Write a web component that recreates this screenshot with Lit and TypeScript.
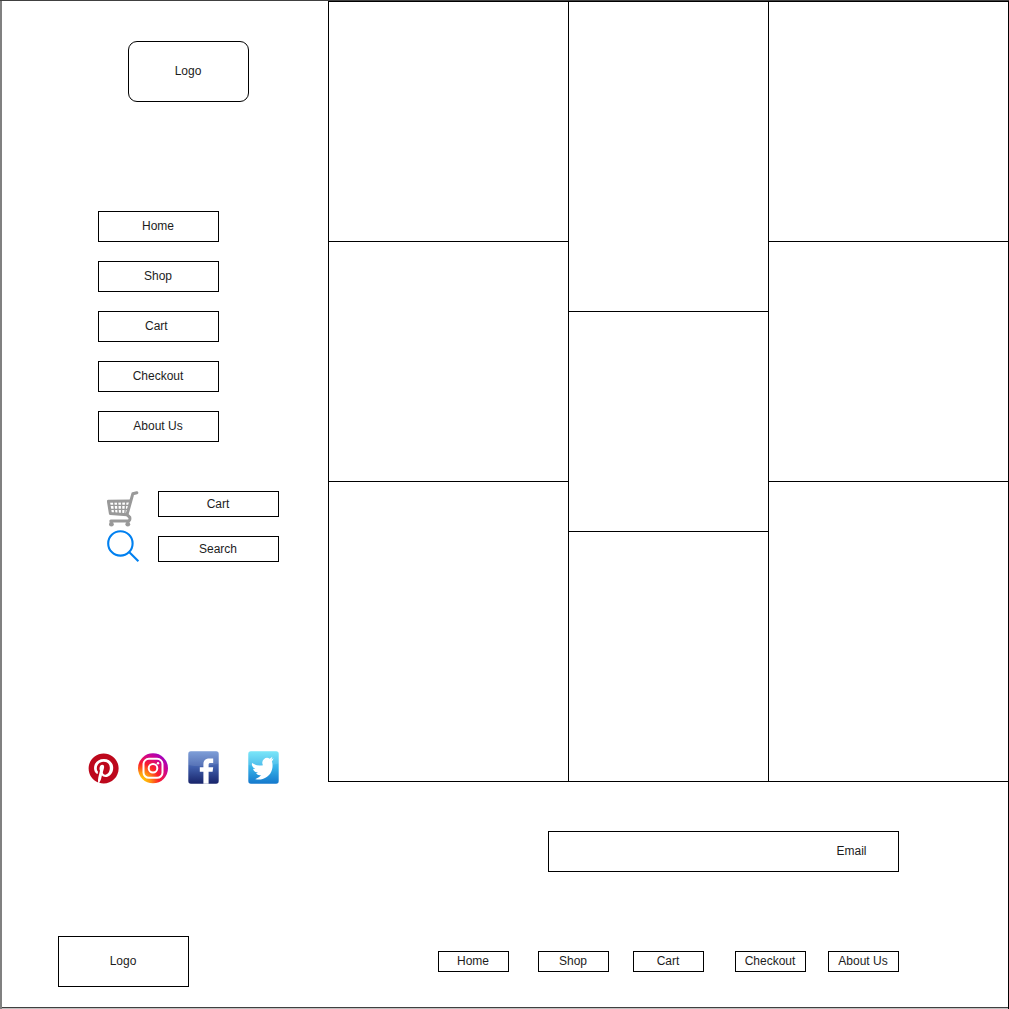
import { LitElement, html, css } from "lit";
import { customElement } from "lit/decorators.js";

const NAV = ["Home", "Shop", "Cart\u00a0", "Checkout", "About Us"];
const FOOTER_NAV = ["Home", "Shop", "Cart", "Checkout", "About Us"];

const cartIcon = html`<svg class="cart" width="32" height="36" viewBox="0 0 32 36" fill="none" stroke="#999" stroke-linejoin="round">
  <path d="M29.8 1.7 L25.8 2.8 L20 23.6 L22.8 26.4 Q23.4 29.8 21 30 H3.8" stroke-width="3" stroke-linecap="round"/>
  <path d="M23.6 10 L1.4 10.3 L3.4 22.4 L20 23.8" stroke-width="3"/>
  <path d="M2 14.4 H22.6 M3 18.4 H21.6 M6.6 10.5 L7.8 22.5 M10.6 10.5 L11.2 22.8 M14.6 10.5 V23 M18.8 10.5 L17.8 23.2" stroke-width="1.4"/>
  <circle cx="4.4" cy="33.2" r="2.4" fill="#999" stroke="none"/>
  <circle cx="20.8" cy="33.2" r="2.4" fill="#999" stroke="none"/>
</svg>`;

const searchIcon = html`<svg class="search" width="33" height="33" viewBox="0 0 33 33" fill="none" stroke="#0080f0" stroke-width="2.1">
  <circle cx="13.4" cy="13.4" r="12.2"/><path d="M22.1 22.1 L31.4 31.2"/>
</svg>`;

const pinterest = html`<svg class="pin" width="31" height="31" viewBox="-.5 -.4 24.8 24.8" fill="#bd081c">
  <path d="M12 0C5.373 0 0 5.372 0 12c0 5.084 3.163 9.426 7.627 11.174-.105-.949-.2-2.405.042-3.441.218-.937 1.407-5.965 1.407-5.965s-.359-.719-.359-1.782c0-1.668.967-2.914 2.171-2.914 1.023 0 1.518.769 1.518 1.69 0 1.029-.655 2.568-.994 3.995-.283 1.194.599 2.169 1.777 2.169 2.133 0 3.772-2.249 3.772-5.495 0-2.873-2.064-4.882-5.012-4.882-3.414 0-5.418 2.561-5.418 5.207 0 1.031.397 2.138.893 2.738a.36.36 0 0 1 .083.345l-.333 1.36c-.053.22-.174.267-.402.161-1.499-.698-2.436-2.889-2.436-4.649 0-3.785 2.75-7.262 7.929-7.262 4.163 0 7.398 2.967 7.398 6.931 0 4.136-2.607 7.464-6.227 7.464-1.216 0-2.359-.631-2.75-1.378l-.748 2.853c-.271 1.043-1.002 2.35-1.492 3.146C9.57 23.812 10.763 24 12 24c6.627 0 12-5.373 12-12 0-6.628-5.373-12-12-12z"/>
</svg>`;

const instagram = html`<svg class="insta" width="31" height="31" viewBox="0 0 31 31" fill="none" stroke="#fff">
  <defs><radialGradient id="ig" cx="0.1" cy="0.95" r="1.2">
    <stop offset="0" stop-color="#ffd800"/><stop offset="0.25" stop-color="#ff9a10"/>
    <stop offset="0.5" stop-color="#fb1f28"/><stop offset="0.75" stop-color="#d0058c"/><stop offset="1" stop-color="#8a00d8"/>
  </radialGradient></defs>
  <circle cx="16" cy="15.3" r="15" fill="url(#ig)" stroke="none"/>
  <rect x="6.5" y="5.8" width="19" height="19" rx="5.4" stroke-width="2"/>
  <circle cx="16" cy="15.3" r="4.3" stroke-width="2"/>
  <circle cx="21" cy="10.3" r="1.2" fill="#fff" stroke="none"/>
</svg>`;

const facebook = html`<svg class="fb" width="31" height="33" viewBox="0 0 31 33">
  <defs><linearGradient id="fbg" x1="0" y1="0" x2="0" y2="1">
    <stop offset="0" stop-color="#7094d4"/><stop offset="0.5" stop-color="#405eab"/><stop offset="1" stop-color="#18246a"/>
  </linearGradient></defs>
  <rect x="0.3" y="0.3" width="30.4" height="32.4" rx="2.6" fill="url(#fbg)"/>
  <path d="M.3 14 Q15 17 30.7 12.5 V3 Q30.7.3 28 .3 H3 Q.3.3.3 3Z" fill="#fff" opacity=".1"/>
  <path d="M15.4 32.7 V20.8 H11.8 V16.2 H15.4 V13.4 C15.4 9.2 17.8 7.6 21.4 7.6 H25.2 V12 H22.8 C21 12 20.6 12.6 20.6 14 V16.2 H25.2 L24.6 20.8 H20.6 V32.7Z" fill="#fff"/>
</svg>`;

const twitter = html`<svg class="tw" width="31" height="33" viewBox="0 0 31 33">
  <defs><linearGradient id="twg" x1="0" y1="0" x2="0" y2="1">
    <stop offset="0" stop-color="#6ce4f8"/><stop offset="0.5" stop-color="#38b2e8"/><stop offset="1" stop-color="#1478cc"/>
  </linearGradient></defs>
  <rect x="0.3" y="0.3" width="30.4" height="32.4" rx="2.6" fill="url(#twg)"/>
  <path d="M.3 14 Q15 17 30.7 12.5 V3 Q30.7.3 28 .3 H3 Q.3.3.3 3Z" fill="#fff" opacity=".1"/>
  <path transform="translate(16.2 17.6) rotate(-16) scale(.98) translate(-12 -12)" fill="#fff" d="M23.953 4.57a10 10 0 01-2.825.775 4.958 4.958 0 002.163-2.723c-.951.555-2.005.959-3.127 1.184a4.92 4.92 0 00-8.384 4.482C7.69 8.095 4.067 6.13 1.64 3.162a4.822 4.822 0 00-.666 2.475c0 1.71.87 3.213 2.188 4.096a4.904 4.904 0 01-2.228-.616v.06a4.923 4.923 0 003.946 4.827 4.996 4.996 0 01-2.212.085 4.936 4.936 0 004.604 3.417 9.867 9.867 0 01-6.102 2.105c-.39 0-.779-.023-1.17-.067a13.995 13.995 0 007.557 2.209c9.053 0 13.998-7.496 13.998-13.985 0-.21 0-.42-.015-.63A9.935 9.935 0 0024 4.59z"/>
</svg>`;

@customElement("app-root")
export class AppRoot extends LitElement {
  static styles = css`
    :host { display: block; }
    * { box-sizing: border-box; }
    svg { display: block; flex: none; }
    .page {
      width: 1009px; height: 1009px; background: #fff; color: #1c1c1c;
      font: 12px/14px "Liberation Sans", Arial, Helvetica, sans-serif;
      display: grid; grid-template: 1px 781px 225px 2px / 2px 1006px 1px;
    }
    .edge-top { grid-area: 1 / 1 / 2 / 4; background: #404040; }
    .edge-left { grid-area: 2 / 1 / 5 / 2; background: #808080; }
    .edge-right { grid-area: 2 / 3 / 5 / 4; background: #000; }
    .edge-bottom { grid-area: 4 / 2 / 5 / 3; background: #c0c0c0; border-top: 1px solid #404040; }
    .main { grid-area: 2 / 2 / 3 / 3; display: flex; }
    .box {
      border: 1px solid #000; background: #fff; display: flex; padding: 0 1px 1px 0;
      align-items: center; justify-content: center; white-space: pre; flex: none;
    }
    .sidebar { width: 326px; display: flex; flex-direction: column; padding-top: 40px; }
    .logo { width: 121px; height: 61px; border-radius: 9px; margin-left: 126px; }
    .nav { display: flex; flex-direction: column; gap: 19px; padding: 109px 0 0 96px; }
    .nav .box { width: 121px; height: 31px; }
    .tools { display: grid; grid-template-columns: 51px 121px; row-gap: 19px; padding: 49px 0 0 105px; }
    .tools .box { height: 26px; padding-bottom: 0; }
    .cell { height: 26px; }
    .search { margin-top: -6px; }
    .socials { display: flex; padding: 189px 0 0 86px; }
    .pin { margin-top: 2px; }
    .insta { margin: 2px 0 0 18px; }
    .fb { margin-left: 20px; }
    .tw { margin-left: 29px; }
    .gallery {
      flex: 1; display: grid; grid-template-columns: 240px 200px 239px;
      border: solid #000; border-width: 1px 0 0 1px;
    }
    .col { display: grid; grid-template-rows: 240px 240px 300px; border-right: 1px solid #000; }
    .col.mid { grid-template-rows: 310px 220px 250px; }
    .col:last-child { border-right: 0; }
    .tile { border-bottom: 1px solid #000; }
    .footer { grid-area: 3 / 2 / 4 / 3; padding: 49px 109px 20px 56px; display: flex; flex-direction: column; justify-content: space-between; }
    .email { width: 351px; height: 41px; align-self: flex-end; justify-content: flex-end; padding-right: 31.5px; }
    .bottom { display: flex; justify-content: space-between; align-items: center; }
    .bottom .brand { width: 131px; height: 51px; }
    .links { display: grid; grid-template-columns: 100px 95px 102px 93px 71px; }
    .links .box { width: 71px; height: 21px; }
  `;

  private column(cls: string) {
    return html`<div class="col ${cls}"><div class="tile"></div><div class="tile"></div><div class="tile"></div></div>`;
  }

  render() {
    return html`<div class="page">
      <div class="edge-top"></div><div class="edge-left"></div><div class="edge-right"></div><div class="edge-bottom"></div>
      <div class="main">
        <aside class="sidebar">
          <div class="box logo">Logo</div>
          <nav class="nav">${NAV.map((n) => html`<div class="box">${n}</div>`)}</nav>
          <div class="tools">
            <div class="cell">${cartIcon}</div><div class="box">Cart</div>
            <div class="cell">${searchIcon}</div><div class="box">Search</div>
          </div>
          <div class="socials">${pinterest}${instagram}${facebook}${twitter}</div>
        </aside>
        <section class="gallery">${this.column("")}${this.column("mid")}${this.column("")}</section>
      </div>
      <footer class="footer">
        <div class="box email">Email</div>
        <div class="bottom">
          <div class="box brand">Logo</div>
          <div class="links">${FOOTER_NAV.map((n) => html`<div class="box">${n}</div>`)}</div>
        </div>
      </footer>
    </div>`;
  }
}
